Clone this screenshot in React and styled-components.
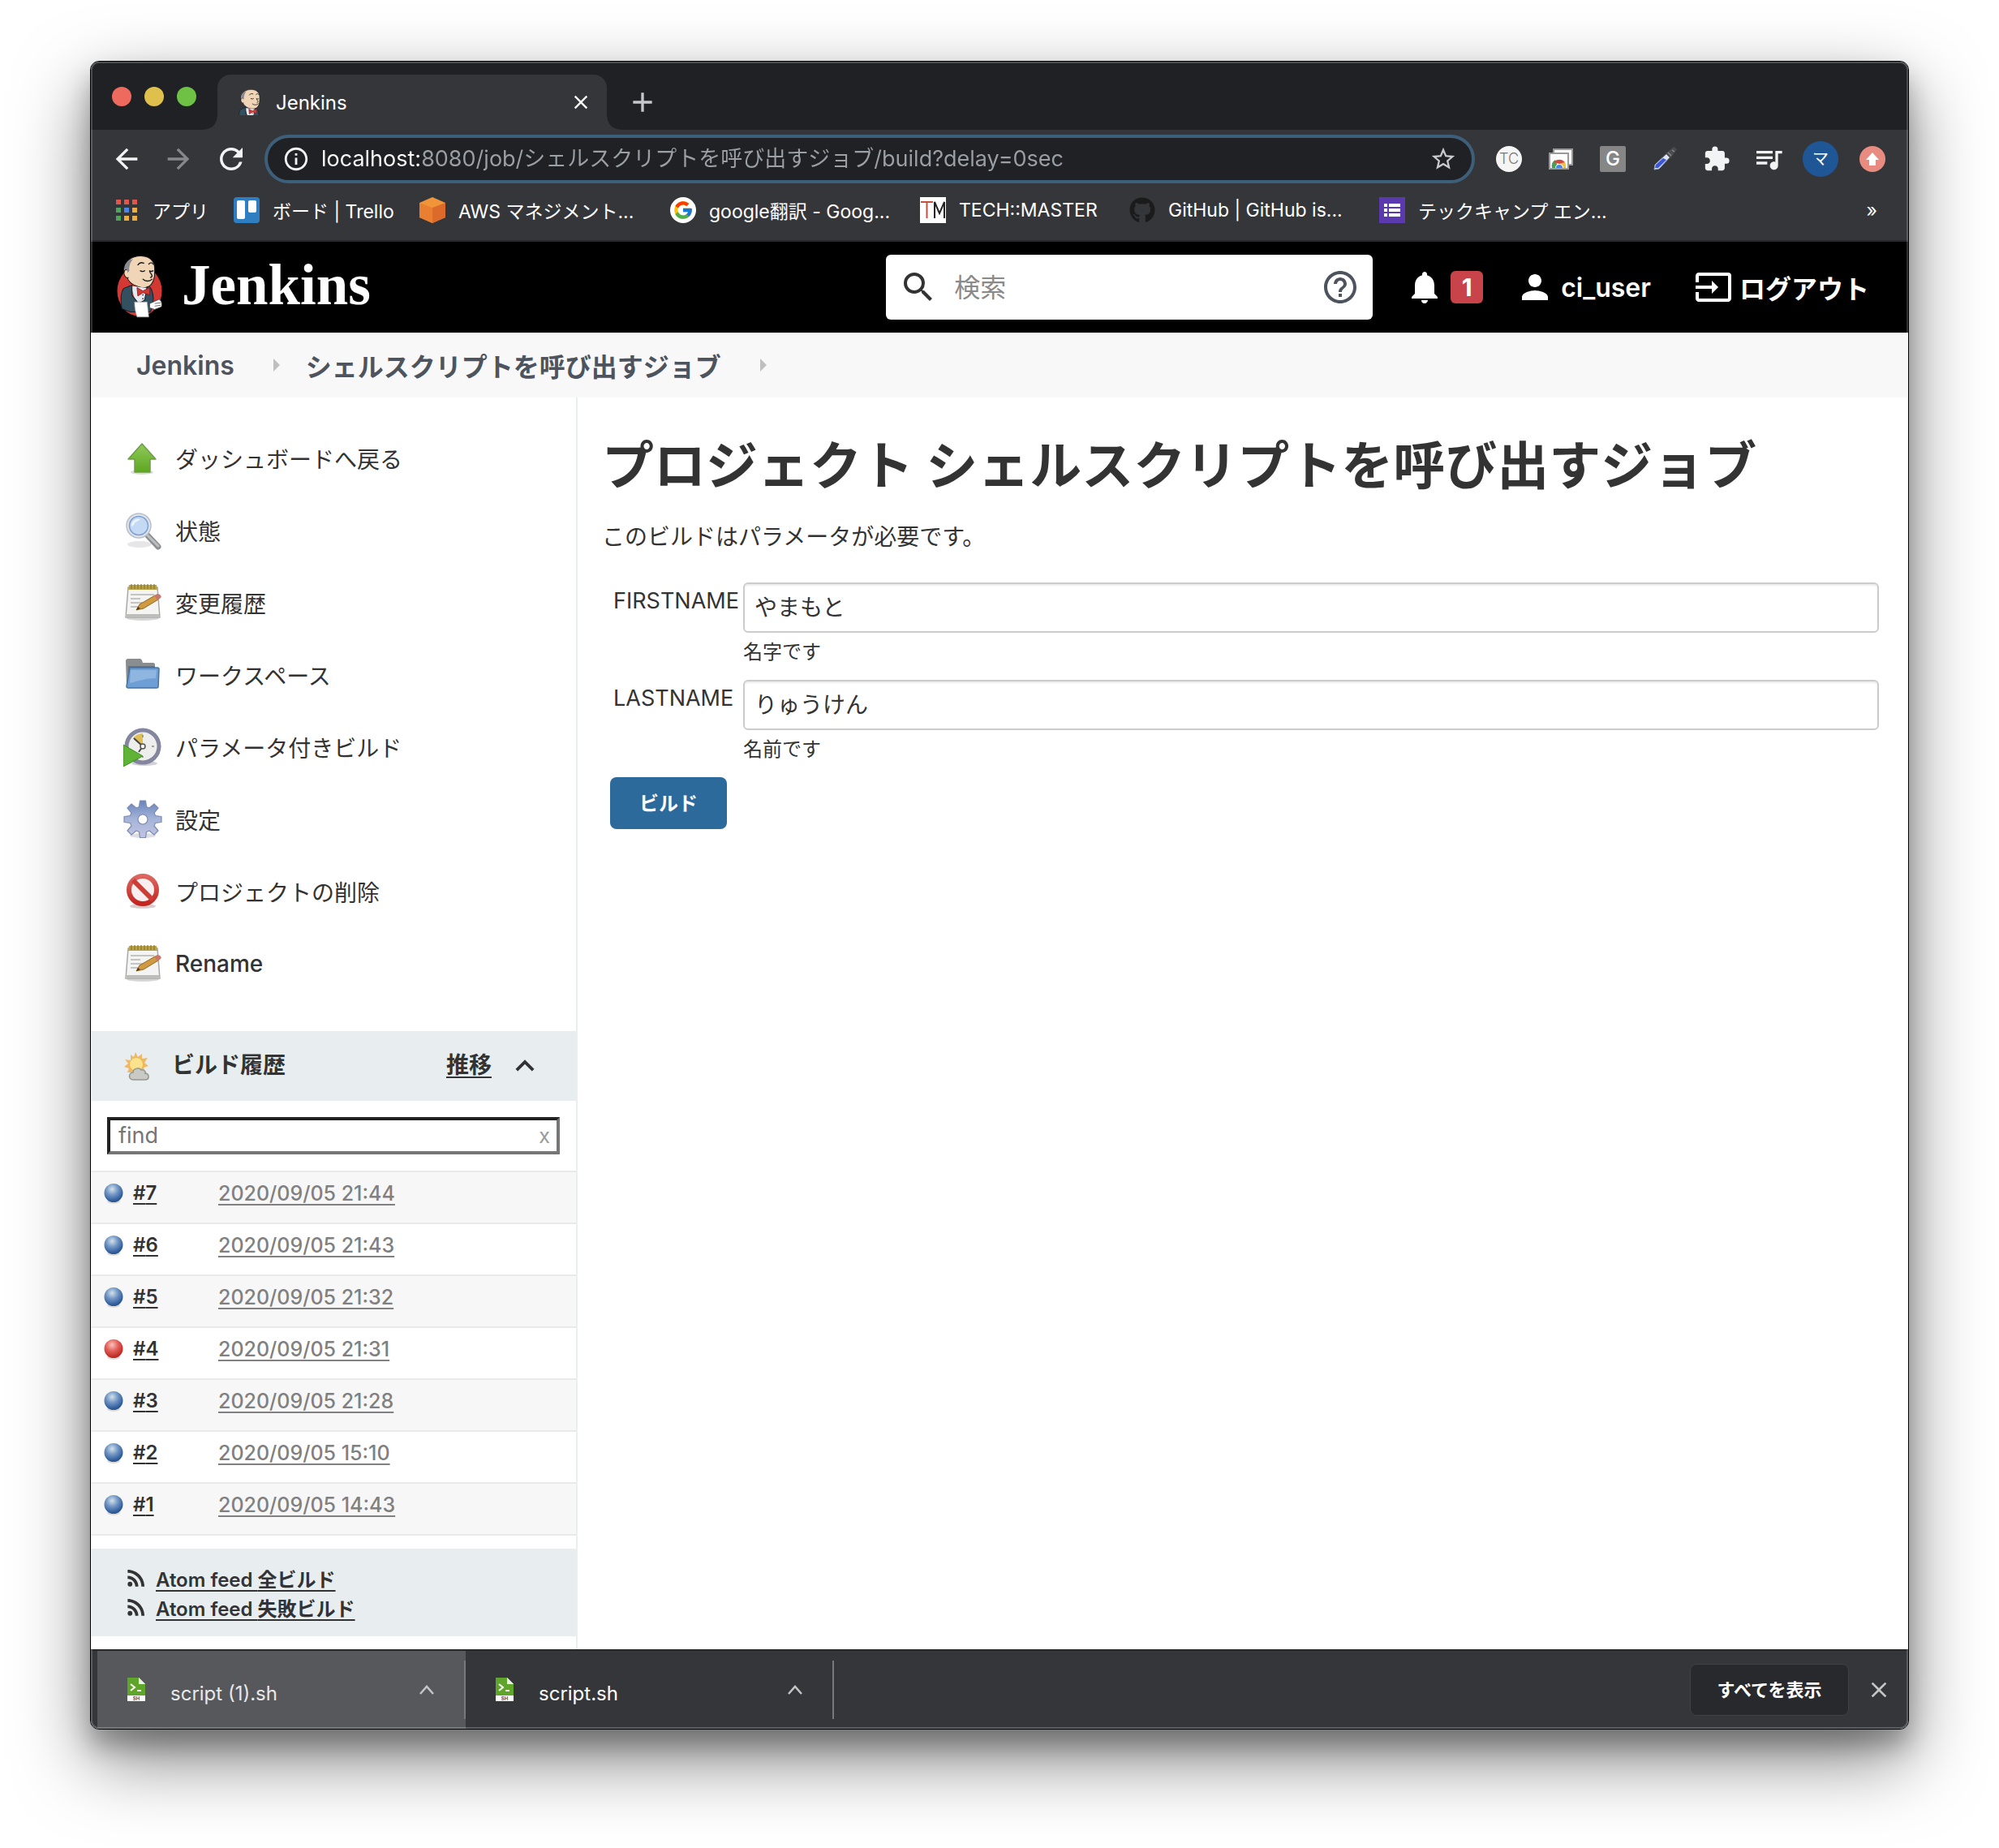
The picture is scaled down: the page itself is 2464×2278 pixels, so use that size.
import React from "react";
import styled, { createGlobalStyle } from "styled-components";
import {
  MdAdd,
  MdArrowBack,
  MdArrowForward,
  MdClose,
  MdExpandLess,
  MdExtension,
  MdHelpOutline,
  MdInfoOutline,
  MdInput,
  MdNotifications,
  MdPerson,
  MdQueueMusic,
  MdRefresh,
  MdRssFeed,
  MdSearch,
  MdStarBorder,
} from "react-icons/md";
import { FaGithub } from "react-icons/fa";
import { FcGoogle } from "react-icons/fc";

const GlobalStyle = createGlobalStyle`
  *, *::before, *::after { box-sizing: border-box; }
  body {
    margin: 0;
    background: #fff;
    color: #333;
    font-family: Inter, "Noto Sans CJK JP", sans-serif;
    -webkit-font-smoothing: antialiased;
  }
  button, input { font: inherit; color: inherit; }
  button { border: 0; padding: 0; background: none; cursor: pointer; }
  a { color: inherit; }
  svg { display: block; flex: none; }
  h1, h2, p, ul { margin: 0; padding: 0; }
  ul { list-style: none; }
`;

const Desktop = styled.div`
  padding: 75px 111px 147px;
  overflow: hidden;
`;

const Window = styled.div`
  position: relative;
  border: 1px solid #000;
  border-radius: 11px;
  overflow: hidden;
  background: #fff;
  box-shadow: 0 36px 90px rgba(0, 0, 0, 0.5), 0 20px 30px rgba(0, 0, 0, 0.25);
  &::after {
    content: "";
    position: absolute;
    inset: 0;
    border-radius: 10px;
    box-shadow: inset 0 0 0 2px rgba(255, 255, 255, 0.2);
    pointer-events: none;
  }
`;

/* ---------- browser: tabs ---------- */

const TabStrip = styled.div`
  display: flex;
  align-items: flex-end;
  height: 84px;
  padding-left: 26px;
  background: #202124;
`;

const Lights = styled.div`
  display: flex;
  gap: 16px;
  height: 82px;
  align-items: center;
  width: 130px;
`;

const Light = styled.button`
  width: 24px;
  height: 24px;
  border-radius: 50%;
  background: ${(p) => p.$color};
`;

const Tab = styled.div`
  position: relative;
  display: flex;
  align-items: center;
  gap: 18px;
  width: 480px;
  height: 68px;
  padding: 0 18px 0 26px;
  border-radius: 16px 16px 0 0;
  background: #35363a;
  color: #fff;
  font-size: 24px;
  &::before,
  &::after {
    content: "";
    position: absolute;
    bottom: 0;
    width: 16px;
    height: 16px;
  }
  &::before {
    left: -16px;
    background: radial-gradient(circle at 0 0, transparent 15px, #35363a 16px);
  }
  &::after {
    right: -16px;
    background: radial-gradient(circle at 100% 0, transparent 15px, #35363a 16px);
  }
`;

const TabTitle = styled.span`
  flex: 1;
`;

const NewTab = styled.button`
  display: flex;
  align-items: center;
  height: 68px;
  margin-left: 24px;
  color: #c4c7cb;
`;

/* ---------- browser: toolbar ---------- */

const Toolbar = styled.div`
  display: flex;
  align-items: center;
  gap: 20px;
  height: 72px;
  padding: 0 22px 0 24px;
  background: #35363a;
  color: #f1f3f4;
`;

const NavButtons = styled.div`
  display: flex;
  gap: 24px;
`;

const NavButton = styled.button`
  color: ${(p) => (p.disabled ? "#87888b" : "#f1f3f4")};
`;

const Omnibox = styled.div`
  flex: 1;
  display: flex;
  align-items: center;
  gap: 14px;
  height: 60px;
  padding: 0 18px;
  border: 4px solid #3d5f7a;
  border-radius: 30px;
  background: #202124;
`;

const Address = styled.input`
  flex: 1;
  min-width: 0;
  padding: 0;
  border: 0;
  outline: 0;
  font-size: 27px;
  line-height: 40px;
  color: transparent;
  background: linear-gradient(90deg, #fff 122px, #9aa0a6 122px);
  background-clip: text;
  -webkit-background-clip: text;
`;

const Extensions = styled.div`
  display: flex;
  gap: 20px;
`;

const Extension = styled.button`
  display: flex;
  align-items: center;
  justify-content: center;
  width: 44px;
  height: 44px;
  color: #f1f3f4;
`;

const Disc = styled.span`
  display: flex;
  align-items: center;
  justify-content: center;
  width: ${(p) => p.$size}px;
  height: ${(p) => p.$size}px;
  border-radius: ${(p) => (p.$square ? "2px" : "50%")};
  background: ${(p) => p.$bg};
  color: ${(p) => p.$fg};
  font-size: ${(p) => p.$font}px;
  font-weight: ${(p) => p.$weight || 400};
  line-height: 1;
`;

const Bookmarks = styled.nav`
  display: flex;
  align-items: center;
  height: 66px;
  padding: 0 38px 10px 28px;
  border-bottom: 2px solid #28292b;
  background: #35363a;
  color: #fff;
  font-size: 23px;
`;

const Bookmark = styled.a`
  display: flex;
  align-items: center;
  gap: 16px;
  width: ${(p) => p.$width}px;
  white-space: nowrap;
  text-decoration: none;
`;

const MoreBookmarks = styled.button`
  margin-left: auto;
  line-height: 32px;
`;

/* ---------- Jenkins: header ---------- */

const Header = styled.header`
  display: flex;
  align-items: center;
  height: 112px;
  padding: 0 48px 0 32px;
  background: #000;
  color: #fff;
  font-size: 32px;
  font-weight: 600;
`;

const Brand = styled.a`
  display: flex;
  align-items: center;
  gap: 24px;
  margin-right: auto;
  text-decoration: none;
`;

const BrandName = styled.span`
  padding-bottom: 6px;
  font: bold 71px/80px "Liberation Serif", serif;
`;

const Search = styled.form`
  display: flex;
  align-items: center;
  gap: 20px;
  width: 600px;
  height: 80px;
  padding: 0 16px;
  border-radius: 6px;
  background: #fff;
  color: #333;
  font-weight: 400;
`;

const SearchInput = styled.input`
  flex: 1;
  min-width: 0;
  padding: 0;
  border: 0;
  outline: 0;
  background: none;
  &::placeholder {
    color: #8a8a8a;
  }
`;

const HelpLink = styled.a`
  color: #4d545d;
`;

const HeaderLink = styled.a`
  display: flex;
  align-items: center;
  gap: 8px;
  margin-left: ${(p) => p.$gap}px;
  text-decoration: none;
  white-space: nowrap;
`;

const Count = styled.span`
  width: 40px;
  height: 40px;
  border-radius: 6px;
  background: #c9444a;
  font-size: 30px;
  font-weight: 700;
  line-height: 40px;
  text-align: center;
`;

const Breadcrumbs = styled.nav`
  display: flex;
  align-items: center;
  height: 80px;
  padding-left: 56px;
  background: #f8f8f8;
  color: #4d545d;
  font-size: 32px;
  font-weight: 600;
  a {
    text-decoration: none;
  }
`;

const CrumbArrow = styled.svg`
  margin: 0 32px 0 48px;
`;

/* ---------- Jenkins: side panel ---------- */

const Page = styled.div`
  display: flex;
`;

const Side = styled.aside`
  flex: none;
  width: 600px;
  padding-bottom: 16px;
  border-right: 2px solid #e9eef0;
`;

const Tasks = styled.ul`
  padding: 30px 0 39px;
`;

const Task = styled.a`
  display: flex;
  align-items: center;
  gap: 16px;
  height: 89px;
  padding-left: 40px;
  font-size: 28px;
  font-weight: ${(p) => (p.$latin ? 500 : 400)};
  text-decoration: none;
`;

const HistoryHead = styled.div`
  display: flex;
  align-items: center;
  height: 86px;
  padding: 0 40px;
  background: #e8eef0;
  font-size: 28px;
  font-weight: 600;
`;

const HistoryTitle = styled.h2`
  flex: 1;
  padding: 0 0 6px 28px;
  font-size: 28px;
  font-weight: 600;
`;

const TrendLink = styled.a`
  padding-bottom: 6px;
  margin-right: 18px;
  text-underline-offset: 4px;
`;

const Find = styled.div`
  display: flex;
  align-items: center;
  height: 46px;
  margin: 20px;
  padding: 0 8px 0 10px;
  border: 4px solid;
  border-color: #222 #767676 #767676 #222;
`;

const FindInput = styled.input`
  flex: 1;
  min-width: 0;
  padding: 0;
  border: 0;
  outline: 0;
  font-size: 27px;
  line-height: 38px;
  &::placeholder {
    color: #757575;
  }
`;

const ClearFind = styled.button`
  color: #999;
  font-size: 25px;
  line-height: 32px;
`;

const Builds = styled.table`
  width: 100%;
  border-spacing: 0;
  border-bottom: 2px solid #e9eaeb;
  font-size: 24px;
  line-height: 28px;
  text-align: left;
`;

const BuildRow = styled.tr`
  height: 64px;
  background: ${(p) => (p.$shaded ? "#f7f7f7" : "#fff")};
  > * {
    padding: 12px 0 0;
    border-top: 2px solid #e9eaeb;
    vertical-align: top;
  }
  a {
    text-underline-offset: 4px;
    text-decoration-thickness: 2px;
    text-decoration-skip-ink: none;
  }
`;

const BuildName = styled.th`
  width: 157px;
  font-weight: 600;
`;

const BuildLabel = styled.div`
  display: flex;
  align-items: center;
  gap: 12px;
  padding-left: 16px;
`;

const BuildDate = styled.td`
  color: #808080;
  font-size: 25px;
  font-weight: 500;
`;

const Feeds = styled.div`
  margin-top: 16px;
  padding: 18px 40px;
  background: #e8eef0;
`;

const Feed = styled.div`
  display: flex;
  align-items: center;
  gap: 8px;
  height: 36px;
  font-size: 24px;
  font-weight: 600;
  a {
    text-underline-offset: 4px;
    text-decoration-thickness: 2px;
    text-decoration-skip-ink: none;
  }
`;

/* ---------- Jenkins: main panel ---------- */

const Main = styled.main`
  flex: 1;
  padding: 44px 36px 0 30px;
  font-size: 28px;
`;

const Title = styled.h1`
  font-size: 64px;
  font-weight: 700;
  line-height: 80px;
`;

const Lead = styled.p`
  margin: 28px 0 36px;
  line-height: 40px;
`;

const Form = styled.form`
  display: grid;
  gap: 18px;
  padding-left: 10px;
`;

const Field = styled.div`
  display: grid;
  grid-template-columns: 160px 1fr;
  padding-left: 4px;
`;

const FieldLabel = styled.label`
  font-size: 27px;
  line-height: 46px;
`;

const FieldInput = styled.input`
  width: 100%;
  height: 62px;
  padding: 0 12px 4px;
  border: 2px solid #ccc;
  border-radius: 6px;
  outline: 0;
  box-shadow: inset 0 2px 2px rgba(0, 0, 0, 0.08);
`;

const FieldHint = styled.p`
  margin-top: 8px;
  font-size: 24px;
  line-height: 32px;
`;

const BuildButton = styled.button`
  width: 144px;
  height: 64px;
  padding-bottom: 4px;
  border-radius: 8px;
  background: #2b6a9b;
  color: #fff;
  font-size: 24px;
  font-weight: 600;
`;

/* ---------- browser: download shelf ---------- */

const Shelf = styled.footer`
  display: flex;
  align-items: center;
  height: 98px;
  padding: 0 20px 0 8px;
  border-top: 2px solid #28292b;
  background: #35363a;
  color: #fff;
  font-size: 24px;
`;

const Download = styled.div`
  display: flex;
  align-items: center;
  width: 454px;
  height: 96px;
  background: ${(p) => (p.$active ? "#57585b" : "transparent")};
  color: ${(p) => (p.$active ? "#e8e8e9" : "#fff")};
`;

const DownloadFile = styled.button`
  flex: 1;
  display: flex;
  align-items: center;
  gap: 30px;
  padding-left: 36px;
`;

const DownloadName = styled.span`
  padding-top: 8px;
`;

const DownloadMenu = styled.button`
  padding-right: 36px;
  color: #c4c5c7;
`;

const Divider = styled.span`
  width: 2px;
  height: 72px;
  background: #77787b;
`;

const ShowAll = styled.button`
  width: 196px;
  height: 64px;
  margin-left: auto;
  margin-right: 21px;
  padding-bottom: 4px;
  border: 1px solid #414246;
  border-radius: 8px;
  background: #28292c;
  font-size: 22px;
  font-weight: 600;
`;

const CloseShelf = styled.button`
  color: #c4c5c7;
`;

/* ---------- drawings ---------- */

const Butler = ({ width, height, bust }) => (
  <svg width={width} height={height} viewBox={bust ? "4 0 44 50" : "0 0 54 75"} aria-hidden="true">
    {!bust && <ellipse cx="27" cy="42" rx="26.500" ry="30" fill="#d33833" />}
    <path d="M11 9C15 2 25-1 34 1c8 2 11 8 11 15 0 7 0 13-4 18-3 4-9 5-15 3-8-2-13-7-14-13C8 22 7 14 11 9z" fill="#f0d6b7" stroke="#1a1a1a" strokeWidth="1" />
    <path d="M11 9c2-3 4-4 8-5l-3 5c-1 4-2 7-1 9l-3 3c-3-3-4-8-1-12z" fill="#8b8b90" />
    <path d="M12 17c-3-1-4 3-3 6s3 4 5 3" fill="#f0d6b7" stroke="#1a1a1a" strokeWidth="1" />
    <path d="M25 11c2-3 5-3 7-2m6 1c2-2 4-2 5 0M28 18c2 1 4 1 5 0m6 0c2 1 3 1 4 0m-4 1c3 4 4 6 1 7m-9 2c3 3 8 3 11 0" fill="none" stroke="#1a1a1a" strokeWidth="1.300" strokeLinecap="round" />
    <path d="M17 36l5 19 12 4 6-20z" fill="#e6eaf0" />
    <path d="M18 35L8 39c-3 4-4 12-2 24l10 4h24l3-10c1-8 0-14-3-19l-4-1-3 16-7 4-8-10z" fill="#335061" stroke="#12202b" strokeWidth="1" />
    <path d="M24 38l7 4 8-4v9l-8-3-6 4z" fill="#d33833" stroke="#81191a" strokeWidth="0.800" />
    <path d="M31 46v10" stroke="#333" strokeWidth="1.500" strokeDasharray="1.500 3" />
    <path d="M21 55h15l2 18H24c-2-6-3-12-3-18z" fill="#fff" stroke="#999" strokeWidth="0.600" />
    <path d="M39 57l11-5c3 1 4 5 3 9l-8 3-6-2z" fill="#fff" stroke="#444" strokeWidth="0.800" />
    <path d="M45 57l7-1m-7 4l7-1" stroke="#555" strokeWidth="0.800" />
  </svg>
);

const AppsIcon = () => (
  <svg width="32" height="32" viewBox="0 0 32 32" aria-hidden="true">
    {["#e0564b", "#e0564b", "#e0564b", "#4fa35b", "#4a86e8", "#f0ad3f", "#4fa35b", "#f0ad3f", "#f0ad3f"].map((c, i) => (
      <rect key={i} x={3 + (i % 3) * 10} y={3 + Math.floor(i / 3) * 10} width="6" height="6" fill={c} />
    ))}
  </svg>
);

const TrelloIcon = () => (
  <svg width="32" height="32" viewBox="0 0 32 32" aria-hidden="true">
    <rect width="32" height="32" rx="4" fill="#2f7ec2" />
    <rect x="4" y="4" width="10" height="23" rx="2" fill="#fff" />
    <rect x="18" y="4" width="10" height="15" rx="2" fill="#fff" />
  </svg>
);

const AwsIcon = () => (
  <svg width="32" height="32" viewBox="0 0 32 32" aria-hidden="true">
    <path d="M16 0l16 7v18l-16 7-16-7V7z" fill="#f2953a" />
    <path d="M16 13l16-6v18l-16 7z" fill="#dc6a2a" />
    <path d="M0 7l16 6v19L0 25z" fill="#ea7f31" />
  </svg>
);

const GoogleIcon = () => (
  <Disc $size={32} $bg="#fff">
    <FcGoogle size={26} />
  </Disc>
);

const TmIcon = () => (
  <svg width="32" height="32" viewBox="0 0 32 32" aria-hidden="true">
    <rect width="32" height="32" fill="#fff" />
    <path d="M1 6h15M8.500 6v20" stroke="#c4503f" strokeWidth="2" fill="none" />
    <path d="M18 26V6l6 14 6-14v20" stroke="#222" strokeWidth="2" fill="none" />
  </svg>
);

const FormsIcon = () => (
  <svg width="32" height="32" viewBox="0 0 32 32" aria-hidden="true">
    <rect width="32" height="32" fill="#5b3ab0" />
    <path d="M6 8h4v4H6zm6 0h14v4H12zM6 14h4v4H6zm6 0h14v4H12zM6 20h4v4H6zm6 0h14v4H12z" fill="#fff" />
  </svg>
);

const GalleryIcon = () => (
  <svg width="32" height="32" viewBox="0 0 32 32" aria-hidden="true">
    <rect x="7" y="4" width="23" height="19" fill="#fff" stroke="#999" strokeWidth="2" />
    <rect x="2" y="9" width="23" height="19" fill="#fff" stroke="#999" strokeWidth="2" />
    <path d="M5 27a9 9 0 0 1 4-10l4 10z" fill="#4a9e55" />
    <path d="M22 27a9 9 0 0 0-1-7l-8 1v6z" fill="#f3c13c" />
    <path d="M7 20a9 9 0 0 1 14 0l-7 2z" fill="#d24a3d" />
    <path d="M9 27a5 5 0 0 1 10 0z" fill="#fff" />
    <path d="M10 27a4 4 0 0 1 8 0z" fill="#4a86e8" />
  </svg>
);

const DropperIcon = () => (
  <svg width="32" height="32" viewBox="0 0 32 32" aria-hidden="true">
    <path d="M3 29l1-6L18 10l4 4L9 28z" fill="#dfe5f2" stroke="#9aa3b5" strokeWidth="1" />
    <path d="M4 27l1-4 9-8 4 2-10 10z" fill="#3b57d8" />
    <path d="M17 9l6 6 3-4 5-7-4-3-6 5z" fill="#4c4c4e" />
    <path d="M20 8l4 4M25 5l3 2" stroke="#8a8a8c" strokeWidth="1.500" />
  </svg>
);

const UpdateArrow = () => (
  <svg width="20" height="20" viewBox="0 0 20 20" aria-hidden="true">
    <path d="M10 2l8 9h-4v7H6v-7H2z" fill="#fff" />
  </svg>
);

const UpArrow = () => (
  <svg width="48" height="48" viewBox="0 0 48 48" aria-hidden="true">
    <defs>
      <linearGradient id="up-green" x1="0" y1="0" x2="0" y2="1">
        <stop offset="0" stopColor="#8fc95c" />
        <stop offset="1" stopColor="#5fa71f" />
      </linearGradient>
    </defs>
    <ellipse cx="23" cy="41" rx="14" ry="3" fill="#d9ddd5" />
    <path d="M23 6l17 19h-7v16H14V25H6z" fill="url(#up-green)" stroke="#6b9c46" strokeWidth="1.500" strokeLinejoin="round" />
  </svg>
);

const Magnifier = () => (
  <svg width="48" height="48" viewBox="0 0 48 48" aria-hidden="true">
    <ellipse cx="20" cy="41" rx="15" ry="4" fill="#e6e6e8" />
    <path d="M29 29l14 15" stroke="#8d8f92" strokeWidth="7" strokeLinecap="round" />
    <path d="M30 30l13 13" stroke="#bcbec0" strokeWidth="3" strokeLinecap="round" />
    <circle cx="19" cy="18" r="15" fill="#dfe4ea" stroke="#b9c0c9" strokeWidth="1.500" />
    <circle cx="19" cy="18" r="11.500" fill="#c3d9f4" stroke="#7f9fd0" strokeWidth="1.500" />
    <path d="M10 17c1-5 5-8 10-7 3 1-4 2-6 5s-3 6-4 2z" fill="#eef5fd" />
  </svg>
);

const Notepad = () => (
  <svg width="48" height="48" viewBox="0 0 48 48" aria-hidden="true">
    <ellipse cx="24" cy="43" rx="20" ry="3" fill="#d5d5d5" />
    <path d="M6 5h36l3 37H3z" fill="#f4f4f2" stroke="#a9a9a7" strokeWidth="1.500" />
    <path d="M3 38h41l1 4H3z" fill="#bdbdbb" />
    <path d="M7 2h34l1 6H6z" fill="#b8a24a" />
    <path d="M10 1v6m4-6v6m4-6v6m4-6v6m4-6v6m4-6v6m4-6v6m4-6v6" stroke="#8c7728" strokeWidth="1.200" />
    <path d="M9 14h29M9 19h12M9 24h20M9 29h12" stroke="#c4c4c2" strokeWidth="1.800" />
    <path d="M16 33l4-7 19-11 4 5-18 11z" fill="#d09a42" stroke="#94691d" strokeWidth="1" />
    <path d="M38 15l4-2c3 0 6 3 4 5l-4 3z" fill="#c9776a" />
    <path d="M16 33l2-4 3 2z" fill="#4b3a1a" />
  </svg>
);

const Folder = () => (
  <svg width="48" height="48" viewBox="0 0 48 48" aria-hidden="true">
    <path d="M3 7c0-2 1-3 3-3h14c2 0 3 1 4 5h13c1 0 2 1 2 2v27H4z" fill="#8a8d8f" />
    <path d="M6 13h33v20H6z" fill="#6e7173" />
    <path d="M8 15h34c1 0 2 1 2 2l-1 22c0 1-1 1-2 1H6c-1 0-2-1-2-2z" fill="#6e9fd4" stroke="#46719f" strokeWidth="1.500" />
    <path d="M9 18h32l-1 10c-12 0-20 3-32 6z" fill="#8fb6e1" />
  </svg>
);

const ClockPlay = () => (
  <svg width="48" height="48" viewBox="0 0 48 48" aria-hidden="true">
    <ellipse cx="26" cy="44" rx="16" ry="3" fill="#d0d0d6" />
    <circle cx="24" cy="23" r="20" fill="#eeeeec" stroke="#8486a0" strokeWidth="5" />
    <path d="M24 23L12 13c3-4 7-6 12-6z" fill="#e0bf55" />
    <path d="M24 23L13 13m11 10l-5 7" stroke="#444" strokeWidth="2" />
    <circle cx="24" cy="23" r="3" fill="#fff" stroke="#555" strokeWidth="1.500" />
    <path d="M38 23h-3M24 9v3M24 37v-2" stroke="#888" strokeWidth="1.500" />
    <path d="M0 21l24 14L0 48z" fill="#5fb336" stroke="#3f8a20" strokeWidth="1" />
  </svg>
);

const Gear = () => (
  <svg width="48" height="48" viewBox="0 0 48 48" aria-hidden="true">
    <defs>
      <linearGradient id="gear-blue" x1="0" y1="0" x2="0" y2="1">
        <stop offset="0" stopColor="#6784bd" />
        <stop offset="0.500" stopColor="#a5b4d8" />
        <stop offset="1" stopColor="#c3c3e2" />
      </linearGradient>
    </defs>
    <ellipse cx="24" cy="44" rx="16" ry="3" fill="#dddde3" />
    <g fill="url(#gear-blue)" stroke="#7d8cb0" strokeWidth="1.200" strokeLinejoin="round">
      <path
        fillRule="evenodd"
        d="M20.500 1h7l1 7.500 3.500 1.500 6-5 5 5-5 6 1.500 3.500 7.500 1v7l-7.500 1L38 32l5 6-5 5-6-5-3.500 1.500-1 7h-7l-1-7L16 38l-6 5-5-5 5-6-1.500-3.500-7.500-1v-7l7.500-1L10 16l-5-6 5-5 6 5 3.500-1.500zM24 18a6 6 0 1 0 0 12 6 6 0 0 0 0-12z"
      />
    </g>
  </svg>
);

const Ban = () => (
  <svg width="48" height="48" viewBox="0 0 48 48" aria-hidden="true">
    <defs>
      <linearGradient id="ban-red" x1="0" y1="0" x2="0" y2="1">
        <stop offset="0" stopColor="#dd6660" />
        <stop offset="1" stopColor="#c2261f" />
      </linearGradient>
    </defs>
    <ellipse cx="24" cy="42" rx="16" ry="3" fill="#d9cccc" />
    <circle cx="24" cy="22" r="17" fill="#fbeeee" stroke="url(#ban-red)" strokeWidth="6" />
    <path d="M12 10l24 24" stroke="#cb3d36" strokeWidth="6" />
  </svg>
);

const SunCloud = () => (
  <svg width="32" height="36" viewBox="0 0 32 36" aria-hidden="true">
    <path d="M15 1l3 6 5-4v6l7-1-4 6 5 4-6 2 2 6H5l2-5-6-2 5-4-4-5 7 1V4l4 3z" fill="#f0b765" />
    <circle cx="16" cy="16" r="8.500" fill="#fae38c" stroke="#f0b550" strokeWidth="1" />
    <path d="M12 35c-6 0-6-9 0-9 0-5 8-7 10-3 4-1 6 3 5 4 6 1 5 8 0 8z" fill="#c9c9c5" stroke="#96968f" strokeWidth="1.500" />
  </svg>
);

const Ball = ({ color }) => (
  <svg width="24" height="26" viewBox="0 0 24 26" role="img" aria-label={color === "red" ? "失敗" : "成功"}>
    <defs>
      <radialGradient id={`ball-${color}`} cx="0.420" cy="0.300" r="0.650">
        <stop offset="0" stopColor={color === "red" ? "#f9c4c0" : "#d5e2e8"} />
        <stop offset="0.500" stopColor={color === "red" ? "#e4605a" : "#6d94c4"} />
        <stop offset="1" stopColor={color === "red" ? "#bd2b26" : "#2d5796"} />
      </radialGradient>
    </defs>
    <ellipse cx="12" cy="23" rx="8" ry="3" fill="#dcdcd8" />
    <circle cx="12" cy="12.500" r="11.500" fill={`url(#ball-${color})`} />
  </svg>
);

const ShellFile = () => (
  <svg width="24" height="30" viewBox="0 0 24 30" aria-hidden="true">
    <path d="M1 0h14l8 8v21H1z" fill="#fff" />
    <path d="M1 0h14v8h8v14H1z" fill="#5fa52c" />
    <path d="M15 0v8h8z" fill="#e9f3e0" />
    <path d="M5 8l5 4-5 4m8 0h5" fill="none" stroke="#fff" strokeWidth="2" />
    <text x="12" y="28" textAnchor="middle" fontSize="6" fontWeight="700" fill="#555" fontFamily="Inter, sans-serif">SH</text>
  </svg>
);

const Caret = () => (
  <svg width="20" height="14" viewBox="0 0 20 14" aria-hidden="true">
    <path d="M2 12l8-9 8 9" fill="none" stroke="currentColor" strokeWidth="2.500" />
  </svg>
);

const Arrow = () => (
  <CrumbArrow width="8" height="16" viewBox="0 0 8 16" aria-hidden="true">
    <path d="M0 0l8 8-8 8z" fill="#bfbfbf" />
  </CrumbArrow>
);

/* ---------- data ---------- */

const bookmarks = [
  { label: "アプリ", icon: <AppsIcon />, width: 148 },
  { label: "ボード | Trello", icon: <TrelloIcon />, width: 229 },
  { label: "AWS マネジメント...", icon: <AwsIcon />, width: 309 },
  { label: "google翻訳 - Goog...", icon: <GoogleIcon />, width: 308 },
  { label: "TECH::MASTER", icon: <TmIcon />, width: 258 },
  { label: "GitHub | GitHub is...", icon: <FaGithub size={32} color="#1b1b1c" />, width: 308 },
  { label: "テックキャンプ エン...", icon: <FormsIcon />, width: 300 },
];

const tasks = [
  { label: "ダッシュボードへ戻る", icon: <UpArrow /> },
  { label: "状態", icon: <Magnifier /> },
  { label: "変更履歴", icon: <Notepad /> },
  { label: "ワークスペース", icon: <Folder /> },
  { label: "パラメータ付きビルド", icon: <ClockPlay /> },
  { label: "設定", icon: <Gear /> },
  { label: "プロジェクトの削除", icon: <Ban /> },
  { label: "Rename", icon: <Notepad />, latin: true },
];

const builds = [
  { id: 7, date: "2020/09/05 21:44" },
  { id: 6, date: "2020/09/05 21:43" },
  { id: 5, date: "2020/09/05 21:32" },
  { id: 4, date: "2020/09/05 21:31", failed: true },
  { id: 3, date: "2020/09/05 21:28" },
  { id: 2, date: "2020/09/05 15:10" },
  { id: 1, date: "2020/09/05 14:43" },
];

const parameters = [
  { name: "FIRSTNAME", value: "やまもと", hint: "名字です" },
  { name: "LASTNAME", value: "りゅうけん", hint: "名前です" },
];

const downloads = [{ name: "script (1).sh", active: true }, { name: "script.sh" }];

/* ---------- page ---------- */

const Browser = () => (
  <>
    <TabStrip>
      <Lights>
        <Light $color="#ee6a5f" aria-label="閉じる" />
        <Light $color="#e0c04c" aria-label="しまう" />
        <Light $color="#6fc146" aria-label="拡大" />
      </Lights>
      <Tab>
        <Butler width={28} height={32} bust />
        <TabTitle>Jenkins</TabTitle>
        <button aria-label="タブを閉じる">
          <MdClose size={28} />
        </button>
      </Tab>
      <NewTab aria-label="新しいタブ">
        <MdAdd size={40} />
      </NewTab>
    </TabStrip>
    <Toolbar>
      <NavButtons>
        <NavButton aria-label="戻る"><MdArrowBack size={40} /></NavButton>
        <NavButton aria-label="進む" disabled><MdArrowForward size={40} /></NavButton>
        <NavButton aria-label="再読み込み"><MdRefresh size={42} /></NavButton>
      </NavButtons>
      <Omnibox>
        <MdInfoOutline size={34} />
        <Address aria-label="アドレス" defaultValue="localhost:8080/job/シェルスクリプトを呼び出すジョブ/build?delay=0sec" />
        <button aria-label="ブックマーク"><MdStarBorder size={34} color="#c8cacd" /></button>
      </Omnibox>
      <Extensions>
        <Extension><Disc $size={32} $bg="#f5f5f5" $fg="#777" $font={18} $weight={300}>TC</Disc></Extension>
        <Extension aria-label="ギャラリー"><GalleryIcon /></Extension>
        <Extension><Disc $size={32} $bg="#868686" $fg="#fff" $font={24} $weight={500} $square>G</Disc></Extension>
        <Extension aria-label="スポイト"><DropperIcon /></Extension>
        <Extension aria-label="拡張機能"><MdExtension size={34} /></Extension>
        <Extension aria-label="メディア"><MdQueueMusic size={40} /></Extension>
        <Extension><Disc $size={44} $bg="#1f5796" $fg="#fff" $font={20}>マ</Disc></Extension>
        <Extension aria-label="更新"><Disc $size={32} $bg="#e88b80"><UpdateArrow /></Disc></Extension>
      </Extensions>
    </Toolbar>
    <Bookmarks>
      {bookmarks.map((b) => (
        <Bookmark key={b.label} href="#" $width={b.width}>
          {b.icon}
          {b.label}
        </Bookmark>
      ))}
      <MoreBookmarks>»</MoreBookmarks>
    </Bookmarks>
  </>
);

const SidePanel = () => (
  <Side>
    <Tasks>
      {tasks.map((t) => (
        <li key={t.label}>
          <Task href="#" $latin={t.latin}>
            {t.icon}
            {t.label}
          </Task>
        </li>
      ))}
    </Tasks>
    <HistoryHead>
      <SunCloud />
      <HistoryTitle>ビルド履歴</HistoryTitle>
      <TrendLink href="#">推移</TrendLink>
      <button aria-label="折りたたむ">
        <MdExpandLess size={46} />
      </button>
    </HistoryHead>
    <Find>
      <FindInput aria-label="ビルドを検索" placeholder="find" />
      <ClearFind>x</ClearFind>
    </Find>
    <Builds>
      <tbody>
        {builds.map((b) => (
          <BuildRow key={b.id} $shaded={b.id % 2 === 1}>
            <BuildName scope="row">
              <BuildLabel>
                <Ball color={b.failed ? "red" : "blue"} />
                <a href="#">#{b.id}</a>
              </BuildLabel>
            </BuildName>
            <BuildDate>
              <a href="#">{b.date}</a>
            </BuildDate>
          </BuildRow>
        ))}
      </tbody>
    </Builds>
    <Feeds>
      {["全ビルド", "失敗ビルド"].map((f) => (
        <Feed key={f}>
          <MdRssFeed size={32} />
          <a href="#">Atom feed {f}</a>
        </Feed>
      ))}
    </Feeds>
  </Side>
);

const BuildPage = () => (
  <Main>
    <Title>プロジェクト シェルスクリプトを呼び出すジョブ</Title>
    <Lead>このビルドはパラメータが必要です。</Lead>
    <Form onSubmit={(e) => e.preventDefault()}>
      {parameters.map((p) => (
        <Field key={p.name}>
          <FieldLabel htmlFor={p.name}>{p.name}</FieldLabel>
          <div>
            <FieldInput id={p.name} name={p.name} defaultValue={p.value} />
            <FieldHint>{p.hint}</FieldHint>
          </div>
        </Field>
      ))}
      <BuildButton type="submit">ビルド</BuildButton>
    </Form>
  </Main>
);

export default function App() {
  return (
    <>
      <GlobalStyle />
      <Desktop>
        <Window>
          <Browser />
          <Header>
            <Brand href="#">
              <Butler width={56} height={78} />
              <BrandName>Jenkins</BrandName>
            </Brand>
            <Search role="search" onSubmit={(e) => e.preventDefault()}>
              <MdSearch size={48} />
              <SearchInput aria-label="検索" placeholder="検索" />
              <HelpLink href="#" aria-label="ヘルプ"><MdHelpOutline size={48} /></HelpLink>
            </Search>
            <HeaderLink href="#" $gap={40}>
              <MdNotifications size={48} />
              <Count>1</Count>
            </HeaderLink>
            <HeaderLink href="#" $gap={40}>
              <MdPerson size={48} />
              ci_user
            </HeaderLink>
            <HeaderLink href="#" $gap={53}>
              <MdInput size={48} />
              ログアウト
            </HeaderLink>
          </Header>
          <Breadcrumbs>
            <a href="#">Jenkins</a>
            <Arrow />
            <a href="#">シェルスクリプトを呼び出すジョブ</a>
            <Arrow />
          </Breadcrumbs>
          <Page>
            <SidePanel />
            <BuildPage />
          </Page>
          <Shelf>
            {downloads.map((d) => (
              <Download key={d.name} $active={d.active}>
                <DownloadFile>
                  <ShellFile />
                  <DownloadName>{d.name}</DownloadName>
                </DownloadFile>
                <DownloadMenu aria-label={`${d.name} のメニュー`}>
                  <Caret />
                </DownloadMenu>
                <Divider />
              </Download>
            ))}
            <ShowAll>すべてを表示</ShowAll>
            <CloseShelf aria-label="閉じる"><MdClose size={32} /></CloseShelf>
          </Shelf>
        </Window>
      </Desktop>
    </>
  );
}
